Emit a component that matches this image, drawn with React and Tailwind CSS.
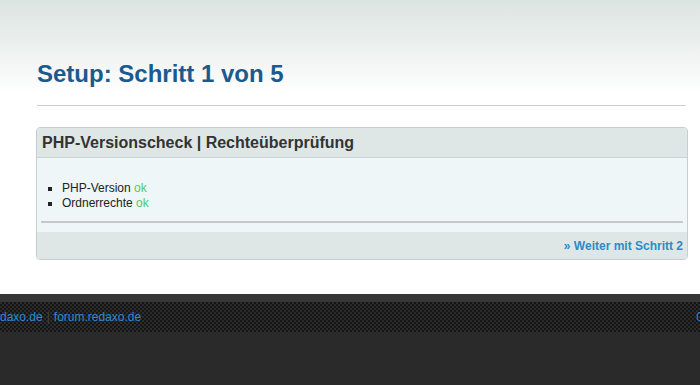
export default function App() {
  return (
    <div className="w-[700px] h-[385px] overflow-hidden bg-white flex flex-col" style={{ fontFamily: '"Liberation Sans", Arial, sans-serif' }}>
      <div className="bg-[linear-gradient(to_bottom,#dce4e2_0px,#e6ecea_30px,#ffffff_95px)] pl-[36px] pr-[12px] pt-[60px]">
        <h1 className="text-[24px] leading-[28px] font-bold text-[#1b5a8e] pl-[1px]">Setup: Schritt 1 von 5</h1>
        <div className="mt-[17px] ml-[1px] mr-[2px] h-px bg-[#cccccc]" />
        <div className="mt-[21px] border border-[#c6cfcf] rounded-[4px] overflow-hidden">
          <div className="h-[30px] bg-[#dfe6e6] border-b border-[#cbd5d5] flex items-center px-[5px]">
            <span className="text-[16px] font-bold text-[#333333]">PHP-Versionscheck | Rechteüberprüfung</span>
          </div>
          <div className="bg-[#eef6f7] px-[4px] pt-[23px]">
            <ul className="list-[square] pl-[21px] text-[12px] leading-[15px] text-[#222222]">
              <li>PHP-Version <span className="text-[#4ecb6a]">ok</span></li>
              <li>Ordnerrechte <span className="text-[#4ecb6a]">ok</span></li>
            </ul>
            <div className="mt-[10px] h-[2px] bg-[#c8c8c8]" />
            <div className="h-[9px]" />
          </div>
          <div className="h-[27px] bg-[#dfe6e6] flex items-center justify-end pr-[4px]">
            <a className="text-[12px] font-bold text-[#2b8bc9]">» Weiter mit Schritt 2</a>
          </div>
        </div>
      </div>
      <div className="mt-[34px] h-[8px] bg-[#363636]" />
      <div className="h-[30px] bg-[repeating-conic-gradient(#151515_0_25%,#2c2c2c_0_50%)] bg-[length:4px_4px] flex items-center justify-between text-[12px] text-[#2a8ad8] overflow-hidden">
        <div className="flex items-center">
          <span>daxo.de</span>
          <span className="mx-[4px] text-[#444444]">|</span>
          <span>forum.redaxo.de</span>
        </div>
        <span className="mr-[-3px]">0</span>
      </div>
      <div className="flex-1 bg-[#2a2a2a]" />
    </div>
  );
}
